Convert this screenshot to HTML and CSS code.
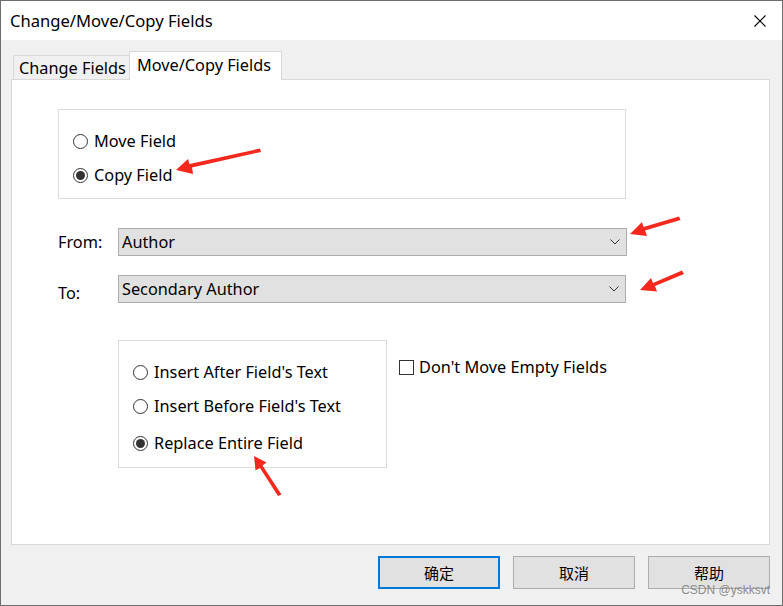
FILE: index.html
```html
<!DOCTYPE html>
<html>
<head>
<meta charset="utf-8">
<link rel="stylesheet" href="styles.css">
</head>
<body>
<div class="window">
  <div class="titlebar">
    <span class="title">Change/Move/Copy Fields</span>
    <svg class="close" width="12" height="12" viewBox="0 0 12 12"><path d="M0.5 0.5 L11.5 11.5 M11.5 0.5 L0.5 11.5" stroke="#000" stroke-width="1.1"/></svg>
  </div>
  <div class="body">
    <div class="tabs">
      <div class="tab">Change Fields</div>
      <div class="tab active">Move/Copy Fields</div>
    </div>
    <div class="panel">
      <div class="group group1">
        <div class="radio-row"><span class="radio"></span><span>Move Field</span></div>
        <div class="radio-row"><span class="radio checked"></span><span>Copy Field</span></div>
      </div>
      <div class="field-row from-row">
        <span class="label">From:</span>
        <div class="select"><span>Author</span><svg width="10" height="6" viewBox="0 0 10 6"><path d="M0.5 0.5 L5 5 L9.5 0.5" fill="none" stroke="#333" stroke-width="1"/></svg></div>
      </div>
      <div class="field-row to-row">
        <span class="label to">To:</span>
        <div class="select"><span>Secondary Author</span><svg width="10" height="6" viewBox="0 0 10 6"><path d="M0.5 0.5 L5 5 L9.5 0.5" fill="none" stroke="#333" stroke-width="1"/></svg></div>
      </div>
      <div class="options">
        <div class="group group2">
          <div class="radio-row"><span class="radio"></span><span>Insert After Field's Text</span></div>
          <div class="radio-row"><span class="radio"></span><span>Insert Before Field's Text</span></div>
          <div class="radio-row"><span class="radio checked"></span><span>Replace Entire Field</span></div>
        </div>
        <div class="check-row"><span class="checkbox"></span><span>Don't Move Empty Fields</span></div>
      </div>
    </div>
    <div class="buttons">
      <div class="btn default">确定</div>
      <div class="btn">取消</div>
      <div class="btn">帮助</div>
    </div>
    <div class="watermark">CSDN @yskksvt</div>
  </div>
  <svg class="arrows" width="783" height="606" viewBox="0 0 783 606">
    <g fill="#f5281e">
      <path d="M260 148.5 L261 152 L192 167.5 L193 174 L176 170 L188 159 L189.5 164 Z"/>
      <path d="M679 216.5 L680.5 220 L645 230.5 L647 236 L630 234 L642 222 L643.5 227 Z"/>
      <path d="M682 270.5 L684 274 L655 286 L657 291.5 L640 290 L651 278 L653 283 Z"/>
      <path d="M281.5 494.5 L278 496 L260 468 L255.5 470.5 L254 456 L266.5 462.5 L262.5 465.5 Z"/>
    </g>
  </svg>
</div>
</body>
</html>
```
FILE: styles.css
```css
* { box-sizing: border-box; }
html, body { margin: 0; padding: 0; }
body {
  width: 783px;
  height: 606px;
  overflow: hidden;
  font-family: "Noto Sans", "Noto Sans CJK SC", sans-serif;
  font-size: 16.3px;
  color: #000;
}
.window {
  position: relative;
  width: 783px;
  height: 606px;
  border: 1px solid #6e6e6e;
  background: #f0f0f0;
  display: flex;
  flex-direction: column;
}
.titlebar {
  height: 39px;
  background: #fff;
  display: flex;
  align-items: center;
  justify-content: space-between;
  padding: 0 16px 0 9px;
}
.title { font-size: 16.6px; line-height: 20px; }
.body {
  position: relative;
  flex: 1;
  padding: 11px 12px 0 10px;
  display: flex;
  flex-direction: column;
}
.tabs {
  display: flex;
  align-items: flex-end;
  height: 28px;
  padding-left: 2px;
  position: relative;
  z-index: 1;
}
.tab {
  height: 24px;
  padding: 0 3px 0 5px;
  border: 1px solid #d9d9d9;
  border-bottom: none;
  background: #f0f0f0;
  display: flex;
  align-items: center;
  line-height: 20px;
  width: 117px;
  padding-top: 1px;
}
.tab.active {
  height: 29px;
  margin-bottom: -1px;
  background: #fff;
  width: 153px;
  padding: 0 0 3px 7px;
  margin-left: -1px;
}
.panel {
  background: #fff;
  border: 1px solid #d9d9d9;
  height: 466px;
  padding: 29px 0 0 46px;
  display: flex;
  flex-direction: column;
}
.group {
  border: 1px solid #dcdcdc;
}
.group1 {
  width: 568px;
  height: 90px;
  padding: 20px 0 0 14px;
  display: flex;
  flex-direction: column;
  gap: 12px;
}
.radio-row {
  display: flex;
  align-items: center;
  height: 22px;
  line-height: 20px;
}
.radio {
  width: 15px;
  height: 15px;
  border: 1px solid #333;
  border-radius: 50%;
  margin-right: 6px;
  flex: none;
  display: flex;
  align-items: center;
  justify-content: center;
}
.radio.checked::after {
  content: "";
  width: 9px;
  height: 9px;
  border-radius: 50%;
  background: #333;
}
.field-row {
  display: flex;
  align-items: center;
}
.from-row { margin-top: 29px; }
.to-row { margin-top: 19px; }
.label {
  width: 60px;
  line-height: 20px;
}
.label.to { padding-top: 8px; }
.select {
  width: 509px;
  height: 28px;
  background: #e1e1e1;
  border: 1px solid #adadad;
  display: flex;
  align-items: center;
  justify-content: space-between;
  padding: 0 6px 0 3px;
  line-height: 20px;
}
.to-row .select { width: 508px; }
.options {
  display: flex;
  margin-top: 37px;
  margin-left: 60px;
}
.group2 {
  width: 269px;
  height: 128px;
  padding: 20px 0 0 14px;
  display: flex;
  flex-direction: column;
  gap: 12px;
}
.group2 .radio-row:nth-child(3) { margin-top: 3px; }
.check-row {
  display: flex;
  align-items: center;
  margin-left: 12px;
  margin-top: 16px;
  height: 22px;
  line-height: 20px;
}
.checkbox {
  width: 15px;
  height: 15px;
  border: 1px solid #333;
  margin-right: 5px;
}
.buttons {
  display: flex;
  justify-content: flex-end;
  gap: 13px;
  margin-top: 11px;
}
.btn {
  width: 122px;
  height: 33px;
  background: #e1e1e1;
  border: 1px solid #adadad;
  display: flex;
  align-items: center;
  justify-content: center;
  font-family: "Noto Sans CJK SC", sans-serif;
  font-size: 15px;
}
.btn.default {
  border: 2px solid #0078d7;
}
.watermark {
  position: absolute;
  right: 12px;
  bottom: 8px;
  font-family: "Liberation Sans", sans-serif;
  font-size: 12px;
  color: rgba(120,120,120,0.85);
}
.arrows {
  position: absolute;
  left: -1px;
  top: -1px;
  pointer-events: none;
}
```
